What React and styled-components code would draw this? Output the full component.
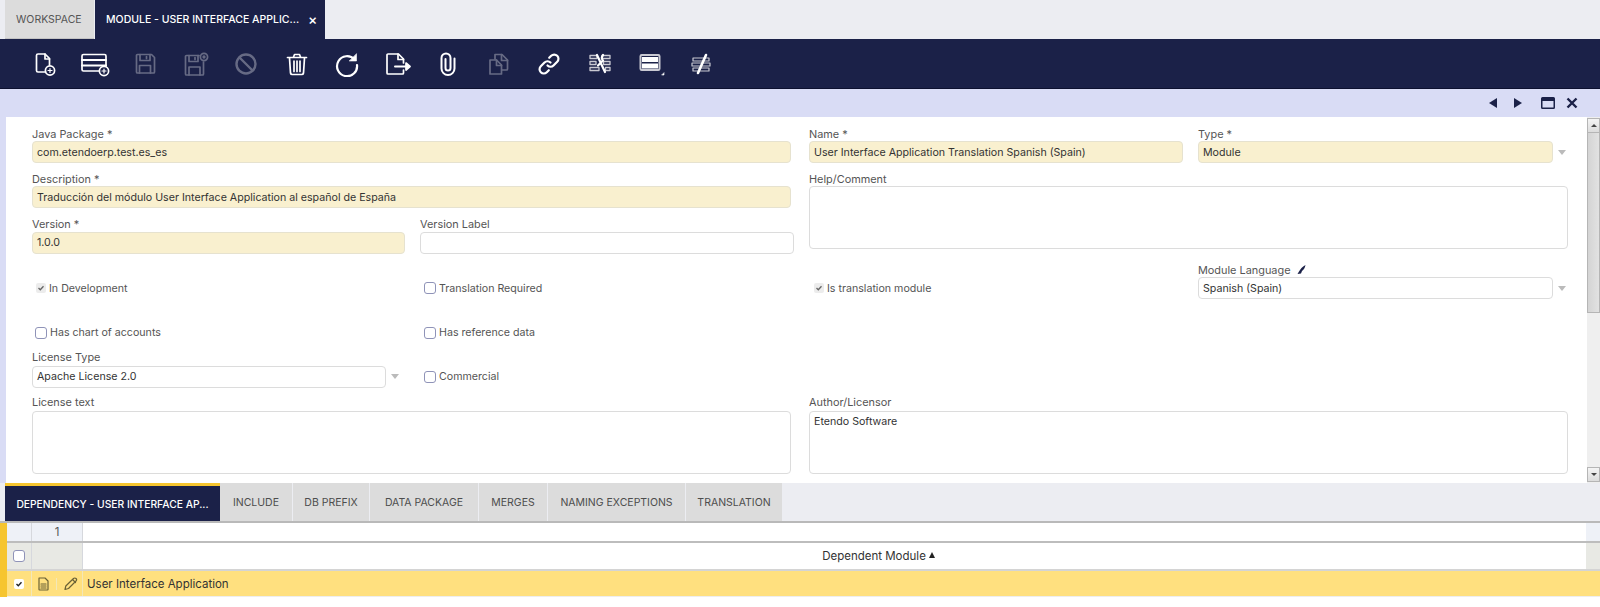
import React from "react";
import styled, { createGlobalStyle } from "styled-components";

const NAVY = "#1b2148";
const FONT = `Inter, "Noto Sans", "Liberation Sans", sans-serif`;

const GlobalStyle = createGlobalStyle`
  html, body {
    margin: 0;
    padding: 0;
    background: white;
    font-family: ${FONT};
  }
`;

const Page = styled.div`
  width: 1600px;
  height: 607px;
  overflow: hidden;
  display: flex;
  flex-direction: column;
  background: white;
  color: #333;
`;

const TopTabs = styled.div`
  height: 39px;
  flex: none;
  display: flex;
  padding-left: 5px;
  background: #ecedf2;
  box-sizing: border-box;
`;

const TopTab = styled.div`
  height: 39px;
  box-sizing: border-box;
  display: flex;
  align-items: center;
  white-space: nowrap;
  font-size: 10.5px;
  width: ${(p) => p.$width}px;
  padding-left: ${(p) => p.$pad}px;
  margin-right: 1px;
  background: ${(p) => (p.$active ? NAVY : "#dcdcdc")};
  color: ${(p) => (p.$active ? "#fff" : "#555")};
  font-weight: ${(p) => (p.$active ? 500 : 400)};
  border-bottom: ${(p) => (p.$active ? "none" : "1px solid #c4c4c4")};
`;

const CloseMark = styled.span`
  margin-left: 9px;
  font-size: 14px;
  line-height: 14px;
`;

const Toolbar = styled.div`
  height: 50px;
  flex: none;
  display: flex;
  align-items: center;
  padding: 1px 0 0 19px;
  background: ${NAVY};
  border-bottom: 1px solid #0d1130;
  box-sizing: border-box;
`;

const ToolButton = styled.div`
  width: 50.5px;
  height: 30px;
  flex: none;
  display: flex;
  align-items: center;
  justify-content: center;
  opacity: ${(p) => (p.$disabled ? 0.33 : 1)};
  svg {
    display: block;
    fill: none;
    stroke: #fff;
    stroke-width: 1.7;
    stroke-linecap: round;
    stroke-linejoin: round;
  }
`;

const Middle = styled.div`
  height: 394px;
  flex: none;
  display: flex;
  flex-direction: column;
  background: #d9dcf5;
`;

const WindowControls = styled.div`
  height: 28px;
  flex: none;
  display: flex;
  align-items: center;
  justify-content: flex-end;
  padding-right: 22px;
`;

const ControlButton = styled.div`
  margin-left: ${(p) => p.$left || 0}px;
  display: flex;
  svg {
    display: block;
    fill: ${NAVY};
    stroke: none;
  }
`;

const CloseSvg = styled.svg`
  && {
    stroke: ${NAVY};
    stroke-width: 2.4;
    fill: none;
  }
`;

const FormPanel = styled.div`
  flex: 1;
  display: flex;
  margin-left: 6px;
  background: white;
  min-height: 0;
`;

const FormGrid = styled.div`
  flex: 1;
  display: grid;
  grid-template-columns: 388px 389px 389px 1fr;
  grid-template-rows: repeat(3, 45.4px) 44.4px 44.4px 45.4px repeat(2, 45.4px);
  padding: 9px 19px 0 26px;
  align-content: start;
`;

const Cell = styled.div`
  grid-column: ${(p) => p.$col} / span ${(p) => p.$span || 1};
  grid-row: ${(p) => p.$row} / span ${(p) => p.$rows || 1};
  display: flex;
  flex-direction: column;
  min-width: 0;
`;

const Label = styled.div`
  height: 15px;
  box-sizing: border-box;
  padding-bottom: ${(p) => p.$up || 0}px;
  font-size: 10.9px;
  color: #555;
  display: flex;
  align-items: center;
  gap: 6px;
`;

const FieldRow = styled.div`
  display: flex;
  align-items: center;
  margin-right: ${(p) => p.$gap || 0}px;
`;

const Field = styled.div`
  flex: 1;
  height: 22px;
  box-sizing: border-box;
  padding: 0 4px;
  display: flex;
  align-items: center;
  font-size: 10.65px;
  color: #333;
  border-radius: 4px;
  white-space: nowrap;
  background: ${(p) => (p.$required ? "#f9f0cf" : "#fff")};
  border: 1.5px solid ${(p) => (p.$required ? "#e6e2cf" : "#dcdcdc")};
`;

const TextArea = styled.div`
  flex: ${(p) => (p.$grow ? 1 : "none")};
  height: 63px;
  box-sizing: border-box;
  padding: 3px 4px;
  font-size: 10.65px;
  line-height: 14px;
  color: #333;
  border-radius: 4px;
  background: #fff;
  border: 1.5px solid #dcdcdc;
`;

const SelectArrow = styled.span`
  flex: none;
  width: 0;
  height: 0;
  margin: 0 2px 0 5px;
  border-left: 4px solid transparent;
  border-right: 4px solid transparent;
  border-top: 5px solid #bbb;
`;

const CheckRow = styled.div`
  height: 22px;
  margin-top: 15px;
  display: flex;
  align-items: center;
  gap: 3px;
  padding-left: ${(p) => p.$pad || 4}px;
  font-size: 10.65px;
  color: #555;
`;

const Box = styled.span`
  width: 12px;
  height: 12px;
  flex: none;
  box-sizing: border-box;
  border: 1px solid #8f93b8;
  border-radius: 3px;
  background: #fff;
`;

const DisabledBox = styled.span`
  width: 10px;
  height: 10px;
  flex: none;
  box-sizing: border-box;
  border-radius: 2px;
  background: #ececec;
  color: #666;
  display: flex;
  align-items: center;
  justify-content: center;
  svg {
    fill: none;
    stroke: currentColor;
    stroke-width: 1.3;
  }
`;

const Scrollbar = styled.div`
  width: 13px;
  flex: none;
  display: flex;
  flex-direction: column;
  background: #efefef;
  box-sizing: border-box;
`;

const ScrollButton = styled.div`
  height: 15px;
  flex: none;
  box-sizing: border-box;
  border: 1px solid #b5b5b5;
  background: linear-gradient(#f4f4f4, #dcdcdc);
  display: flex;
  align-items: center;
  justify-content: center;
  margin-top: ${(p) => p.$top || 0}px;
`;

const ScrollTri = styled.span`
  width: 0;
  height: 0;
  border-left: 3px solid transparent;
  border-right: 3px solid transparent;
  ${(p) => (p.$up ? "border-bottom: 3px solid #444;" : "border-top: 3px solid #444;")}
`;

const ScrollThumb = styled.div`
  height: 180px;
  flex: none;
  box-sizing: border-box;
  border: 1px solid #b5b5b5;
  border-top: none;
  background: linear-gradient(90deg, #d4d4d4, #e2e2e2);
`;

const SubTabs = styled.div`
  height: 38px;
  flex: none;
  display: flex;
  padding-left: 5px;
  background: #ecedf2;
  border-bottom: 2px solid #b9b9b9;
`;

const SubTab = styled.div`
  height: 38px;
  box-sizing: border-box;
  display: flex;
  align-items: center;
  justify-content: center;
  flex: none;
  white-space: nowrap;
  width: ${(p) => p.$width}px;
  font-size: ${(p) => (p.$active ? 10.3 : 10.5)}px;
  margin-right: ${(p) => (p.$active ? 0 : 1)}px;
  background: ${(p) => (p.$active ? NAVY : "#dcdcdc")};
  color: ${(p) => (p.$active ? "#fff" : "#4d4d4d")};
  font-weight: ${(p) => (p.$active ? 500 : 400)};
  border-top: ${(p) => (p.$active ? "3px solid #f6c52f" : "none")};
  padding-top: ${(p) => (p.$active ? 0 : 1)}px;
`;

const GridArea = styled.div`
  flex: 1;
  display: flex;
  flex-direction: column;
  background: white;
`;

const GridBody = styled.div`
  display: flex;
  flex-direction: column;
  border-left: 7px solid #f6c52f;
`;

const GridRow = styled.div`
  display: grid;
  grid-template-columns: 25px 51px 1fr 14px;
  height: ${(p) => p.$height}px;
  box-sizing: border-box;
  background: ${(p) => p.$bg || "#fff"};
  border-bottom: ${(p) => p.$line || 1}px solid ${(p) => p.$lineColor || "#c8c8c8"};
`;

const GridCell = styled.div`
  display: flex;
  align-items: center;
  justify-content: ${(p) => p.$justify || "center"};
  box-sizing: border-box;
  min-width: 0;
  font-size: 11.5px;
  color: ${(p) => p.$color || "#333"};
  background: ${(p) => p.$bg || "transparent"};
  border-right: ${(p) => (p.$border ? `1px solid ${p.$border}` : "none")};
  padding-left: ${(p) => p.$pad || 0}px;
  gap: ${(p) => p.$gap || 0}px;
`;

const RowCheck = styled.span`
  width: 10px;
  height: 10px;
  background: #fff;
  border-radius: 2px;
  display: flex;
  align-items: center;
  justify-content: center;
  svg {
    fill: none;
    stroke: #222;
    stroke-width: 1.4;
  }
`;

const SortTri = styled.span`
  width: 0;
  height: 0;
  margin: 0 0 3px 3px;
  border-left: 3.5px solid transparent;
  border-right: 3.5px solid transparent;
  border-bottom: 6px solid #222;
`;

const Divider = styled.span`
  width: 1px;
  height: 12px;
  background: #f3e7b8;
`;

const RowIcon = styled.svg`
  display: block;
  fill: none;
  stroke: #6a6136;
  stroke-width: 1.2;
  stroke-linejoin: round;
  stroke-linecap: round;
`;

const Tick = () => (
  <svg width="8" height="8" viewBox="0 0 8 8">
    <path d="M1.5 4 L3.3 5.8 L6.5 2.2" />
  </svg>
);

const PlusBadge = ({ cx, cy }) => (
  <>
    <circle cx={cx} cy={cy} r="4.6" />
    <path d={`M${cx - 2} ${cy}h4M${cx} ${cy - 2}v4`} strokeWidth="1.2" />
  </>
);

const toolIcons = [
  {
    w: 24,
    body: (
      <>
        <path d="M13.5 20 H6 a1.5 1.5 0 0 1-1.5-1.5 V3.5 A1.5 1.5 0 0 1 6 2 h7 l4.5 4.5 V13" />
        <path d="M13 2 v5 h4.5" />
        <PlusBadge cx={18} cy={18.5} />
      </>
    ),
  },
  {
    w: 30,
    body: (
      <>
        <path d="M19 19 H3.5 A1.5 1.5 0 0 1 2 17.5 V4 A1.5 1.5 0 0 1 3.5 2.5 h21 A1.5 1.5 0 0 1 26 4 v10" />
        <path d="M2 8 h24 M2 13.5 h24" strokeWidth="2" />
        <PlusBadge cx={24} cy={19} />
      </>
    ),
  },
  {
    w: 24,
    disabled: true,
    body: (
      <>
        <path d="M4.5 2.5 h14 l3 3 v14.5 a1 1 0 0 1-1 1 h-16 a1 1 0 0 1-1-1 V3.5 a1 1 0 0 1 1-1 z" />
        <path d="M7 2.5 v6 h10 v-6 M13.5 4.5 v2" />
        <path d="M6.5 21 v-7.5 h11 V21" />
      </>
    ),
  },
  {
    w: 26,
    disabled: true,
    body: (
      <>
        <path d="M16 3.5 H3.5 a1 1 0 0 0-1 1 V22 a1 1 0 0 0 1 1 h16 a1 1 0 0 0 1-1 V10" />
        <path d="M6 3.5 v6 h9 v-6 M12 5.5 v2" />
        <path d="M6 23 v-8 h11 v8" />
        <circle cx="21" cy="5" r="3.6" />
        <circle cx="21" cy="5" r="0.8" />
      </>
    ),
  },
  {
    w: 24,
    disabled: true,
    body: (
      <>
        <circle cx="12" cy="12" r="9.5" strokeWidth="2.4" />
        <path d="M5.5 5.5 L18.5 18.5" strokeWidth="2.4" />
      </>
    ),
  },
  {
    w: 24,
    body: (
      <>
        <path d="M2.5 5.5 h19 M8.5 5 l1-2.5 h5 l1 2.5" />
        <path d="M4.5 6 l1 15 a1.8 1.8 0 0 0 1.8 1.5 h9.4 a1.8 1.8 0 0 0 1.8-1.5 l1-15" />
        <path d="M9 9 v10.5 M12 9 v10.5 M15 9 v10.5" />
      </>
    ),
  },
  {
    w: 24,
    body: (
      <>
        <path d="M19.5 7.5 A10 10 0 1 0 22 13" strokeWidth="2.2" />
        <path d="M21.5 2 v7 h-7 z" fill="#fff" strokeWidth="0.6" />
      </>
    ),
  },
  {
    w: 27,
    body: (
      <>
        <path d="M6 2 h8.5 l5 5 v4 M19.5 18 v3 a1 1 0 0 1-1 1 H4 a1 1 0 0 1-1-1 V3 a1 1 0 0 1 1-1 h2" />
        <path d="M14 2 v5.5 h5.5" />
        <path d="M11 14.5 h12" strokeWidth="2" />
        <path d="M22 11 l4 3.5 -4 3.5 z" fill="#fff" />
      </>
    ),
  },
  {
    w: 20,
    body: (
      <path
        d="M16.5 6.5 V16.5 a6.5 6.5 0 0 1-13 0 V6 a4.5 4.5 0 0 1 9 0 V16 a2.5 2.5 0 0 1-5 0 V7"
        strokeWidth="2"
      />
    ),
  },
  {
    w: 24,
    disabled: true,
    body: (
      <>
        <path d="M8 7 V2.5 h7 l5.5 5.5 V17 a1 1 0 0 1-1 1 H15" />
        <path d="M14.5 2.5 V8.5 H20.5" />
        <path d="M3 8 h6.5 l5 5 V22 H3 z" />
        <path d="M9.5 8 v5.5 h5" />
      </>
    ),
  },
  {
    w: 24,
    body: (
      <>
        <path
          d="M10.5 13.5 a4.2 4.2 0 0 0 6 0 l3.7-3.7 a4.2 4.2 0 0 0-6-6 l-2 2"
          strokeWidth="2.2"
        />
        <path
          d="M13.5 10.5 a4.2 4.2 0 0 0-6 0 l-3.7 3.7 a4.2 4.2 0 0 0 6 6 l2-2"
          strokeWidth="2.2"
        />
      </>
    ),
  },
  {
    w: 24,
    body: (
      <>
        <path d="M2 3.5 h7 v3 H2 z M14 3.5 h8 v3 h-8 z M2 9.5 h6 v3 H2 z M15.5 9.5 h6.5 v3 h-6.5 z M2 15.5 h9 v3 H2 z M17.5 15.5 h4.5 v3 h-4.5 z" strokeWidth="1.3" stroke="#c9c9d2" />
        <path d="M9 3 l8 17 M15 3 c-1.5 2-1.5 4 0 5.5 l-5 5" strokeWidth="2.2" />
      </>
    ),
  },
  {
    w: 30,
    body: (
      <g transform="translate(4 0)">
        <rect x="1.5" y="3" width="19" height="15" rx="1.2" stroke="#c9c9d2" strokeWidth="2" />
        <path d="M3 5 h16 v5 H3 z M3 11.5 h16 v5 H3 z" fill="#fff" stroke="none" />
        <path d="M23 23 h2 v-2 z" fill="#fff" strokeWidth="0.6" />
      </g>
    ),
  },
  {
    w: 24,
    body: (
      <>
        <path d="M4 6 h16 v3 H4 z M3 11 h18 v3 H3 z M4 16 h16 v3 H4 z" stroke="#c9c9d2" strokeWidth="1.2" />
        <path d="M17 3 L9 21" strokeWidth="2.6" />
      </>
    ),
  },
];

const ToolIcons = () =>
  toolIcons.map((icon, i) => (
    <ToolButton key={i} $disabled={icon.disabled}>
      <svg width={icon.w} height="25" viewBox={`0 0 ${icon.w} 25`}>
        {icon.body}
      </svg>
    </ToolButton>
  ));

const TriLeft = () => (
  <svg width="16" height="12" viewBox="0 0 16 12">
    <path d="M12 1 L4 6 L12 11 z" />
  </svg>
);

const TriRight = () => (
  <svg width="16" height="12" viewBox="0 0 16 12">
    <path d="M4 1 L12 6 L4 11 z" />
  </svg>
);

const Maximize = () => (
  <svg width="14" height="12" viewBox="0 0 14 12">
    <path d="M1.5 0 h11 A1.5 1.5 0 0 1 14 1.5 v9 A1.5 1.5 0 0 1 12.5 12 h-11 A1.5 1.5 0 0 1 0 10.5 v-9 A1.5 1.5 0 0 1 1.5 0 z M1.5 4 v6.5 h11 V4 z" fillRule="evenodd" />
  </svg>
);

const CloseX = () => (
  <CloseSvg width="12" height="12" viewBox="0 0 12 12">
    <path d="M1.5 1.5 L10.5 10.5 M10.5 1.5 L1.5 10.5" />
  </CloseSvg>
);

const LinkPen = () => (
  <svg width="9" height="9" viewBox="0 0 9 9">
    <path d="M8.5 0 C8 3 6.5 5 5 6 L4 8.5 L0.5 9 L2 6.5 C3.5 4 5 2 8.5 0 z" fill={NAVY} />
  </svg>
);

function App() {
  return (
    <Page>
      <GlobalStyle />
      <TopTabs>
        <TopTab $width={89} $pad={11}>WORKSPACE</TopTab>
        <TopTab $active $width={230} $pad={11}>
          MODULE - USER INTERFACE APPLIC...
          <CloseMark>×</CloseMark>
        </TopTab>
      </TopTabs>

      <Toolbar>
        <ToolIcons />
      </Toolbar>

      <Middle>
        <WindowControls>
          <ControlButton><TriLeft /></ControlButton>
          <ControlButton $left={9}><TriRight /></ControlButton>
          <ControlButton $left={15}><Maximize /></ControlButton>
          <ControlButton $left={11}><CloseX /></ControlButton>
        </WindowControls>
        <FormPanel>
          <FormGrid>
            <Cell $col={1} $span={2} $row={1}>
              <Label>Java Package *</Label>
              <FieldRow $gap={18}>
                <Field $required>com.etendoerp.test.es_es</Field>
              </FieldRow>
            </Cell>
            <Cell $col={3} $row={1}>
              <Label>Name *</Label>
              <FieldRow $gap={15}>
                <Field $required>User Interface Application Translation Spanish (Spain)</Field>
              </FieldRow>
            </Cell>
            <Cell $col={4} $row={1}>
              <Label>Type *</Label>
              <FieldRow>
                <Field $required>Module</Field>
                <SelectArrow />
              </FieldRow>
            </Cell>

            <Cell $col={1} $span={2} $row={2}>
              <Label>Description *</Label>
              <FieldRow $gap={18}>
                <Field $required>Traducción del módulo User Interface Application al español de España</Field>
              </FieldRow>
            </Cell>
            <Cell $col={3} $span={2} $row={2} $rows={2}>
              <Label>Help/Comment</Label>
              <TextArea />
            </Cell>

            <Cell $col={1} $row={3}>
              <Label>Version *</Label>
              <FieldRow $gap={15}>
                <Field $required>1.0.0</Field>
              </FieldRow>
            </Cell>
            <Cell $col={2} $row={3}>
              <Label>Version Label</Label>
              <FieldRow $gap={15}>
                <Field />
              </FieldRow>
            </Cell>

            <Cell $col={1} $row={4}>
              <CheckRow $pad={4}>
                <DisabledBox><Tick /></DisabledBox>
                In Development
              </CheckRow>
            </Cell>
            <Cell $col={2} $row={4}>
              <CheckRow>
                <Box />
                Translation Required
              </CheckRow>
            </Cell>
            <Cell $col={3} $row={4}>
              <CheckRow $pad={5}>
                <DisabledBox><Tick /></DisabledBox>
                Is translation module
              </CheckRow>
            </Cell>
            <Cell $col={4} $row={4}>
              <Label>Module Language <LinkPen /></Label>
              <FieldRow>
                <Field>Spanish (Spain)</Field>
                <SelectArrow />
              </FieldRow>
            </Cell>

            <Cell $col={1} $row={5}>
              <CheckRow $pad={3}>
                <Box />
                Has chart of accounts
              </CheckRow>
            </Cell>
            <Cell $col={2} $row={5}>
              <CheckRow>
                <Box />
                Has reference data
              </CheckRow>
            </Cell>

            <Cell $col={1} $row={6}>
              <Label $up={2}>License Type</Label>
              <FieldRow $gap={19}>
                <Field>Apache License 2.0</Field>
                <SelectArrow />
              </FieldRow>
            </Cell>
            <Cell $col={2} $row={6}>
              <CheckRow>
                <Box />
                Commercial
              </CheckRow>
            </Cell>

            <Cell $col={1} $span={2} $row={7} $rows={2}>
              <Label $up={3}>License text</Label>
              <FieldRow $gap={18}>
                <TextArea $grow />
              </FieldRow>
            </Cell>
            <Cell $col={3} $span={2} $row={7} $rows={2}>
              <Label $up={3}>Author/Licensor</Label>
              <TextArea>Etendo Software</TextArea>
            </Cell>
          </FormGrid>
          <Scrollbar>
            <ScrollButton $top={1}><ScrollTri $up /></ScrollButton>
            <ScrollThumb />
            <ScrollButton $top={154}><ScrollTri /></ScrollButton>
          </Scrollbar>
        </FormPanel>
      </Middle>

      <SubTabs>
        <SubTab $active $width={215}>DEPENDENCY - USER INTERFACE AP...</SubTab>
        <SubTab $width={72}>INCLUDE</SubTab>
        <SubTab $width={76}>DB PREFIX</SubTab>
        <SubTab $width={108}>DATA PACKAGE</SubTab>
        <SubTab $width={68}>MERGES</SubTab>
        <SubTab $width={137}>NAMING EXCEPTIONS</SubTab>
        <SubTab $width={96}>TRANSLATION</SubTab>
      </SubTabs>

      <GridArea>
        <GridBody>
          <GridRow $height={20} $line={2} $lineColor="#bdbdbd">
            <GridCell $bg="#eef1f7" $border="#d6d8dd" />
            <GridCell $bg="#eef1f7" $border="#d6d8dd" $color="#555">1</GridCell>
            <GridCell />
            <GridCell $bg="#eef1f7" />
          </GridRow>
          <GridRow $height={28} $line={2} $lineColor="#d4d4d4">
            <GridCell $bg="#e8e9e4" $border="#d6d8dd"><Box /></GridCell>
            <GridCell $bg="#e8e9e4" $border="#d6d8dd" />
            <GridCell $pad={88}>
              Dependent Module
              <SortTri />
            </GridCell>
            <GridCell $bg="#e8e9e4" />
          </GridRow>
          <GridRow $height={26} $bg="#ffe07f" $lineColor="#eee">
            <GridCell $border="#f3e7b8"><RowCheck><Tick /></RowCheck></GridCell>
            <GridCell $border="#f3e7b8" $gap={6}>
              <RowIcon width="13" height="14" viewBox="0 0 13 14">
                <path d="M2 1 h6 l3 3 v8.5 a.5 .5 0 0 1-.5 .5 h-8 a.5 .5 0 0 1-.5-.5 V1.5 a.5 .5 0 0 1 .5-.5 z" />
                <path d="M4 7 h5 M4 9 h5 M4 11 h5" />
              </RowIcon>
              <Divider />
              <RowIcon width="15" height="14" viewBox="0 0 15 14">
                <path d="M2 12.5 l.8-3.5 L10.5 1.5 a1.5 1.5 0 0 1 2.5 2.5 L5.5 11.5 z M9.5 2.5 l3 3" />
              </RowIcon>
            </GridCell>
            <GridCell $justify="flex-start" $pad={4}>User Interface Application</GridCell>
            <GridCell />
          </GridRow>
        </GridBody>
      </GridArea>
    </Page>
  );
}

export default App;
